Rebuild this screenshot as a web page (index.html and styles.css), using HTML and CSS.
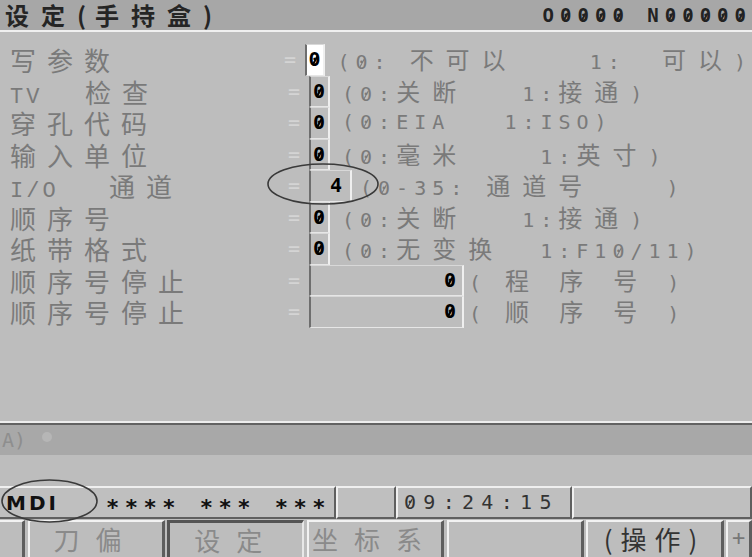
FILE: index.html
```html
<!DOCTYPE html>
<html lang="zh-CN">
<head>
  <meta charset="UTF-8" />
  <title>设定(手持盒)</title>
  <link rel="stylesheet" href="styles.css">
</head>
<body>
<div class="screen">
  <header class="title">
    <span class="name">设定<span class="par">(</span>手持盒<span class="par">)</span></span>
    <span class="prog">O<span class="z">0</span><span class="z">0</span><span class="z">0</span><span class="z">0</span> N<span class="z">0</span><span class="z">0</span><span class="z">0</span><span class="z">0</span><span class="z">0</span></span>
  </header>

  <main class="params">
    <div class="row">
      <span class="label">写参数</span><span class="eq">=</span><span class="box cur"><span class="z">0</span></span>
      <span class="desc">(<span class="z">0</span>: <span class="c">不可以</span>    1:  <span class="c">可以</span>)</span>
    </div>
    <div class="row">
      <span class="label"><span class="lat tv">TV</span>  检查</span><span class="eq">=</span><span class="box"><span class="z">0</span></span>
      <span class="desc">(<span class="z">0</span>:<span class="c">关断</span>   1:<span class="c">接通</span>)</span>
    </div>
    <div class="row">
      <span class="label">穿孔代码</span><span class="eq">=</span><span class="box"><span class="z">0</span></span>
      <span class="desc">(<span class="z">0</span>:EIA   1:ISO)</span>
    </div>
    <div class="row">
      <span class="label">输入单位</span><span class="eq">=</span><span class="box"><span class="z">0</span></span>
      <span class="desc">(<span class="z">0</span>:<span class="c">毫米</span>    1:<span class="c">英寸</span>)</span>
    </div>
    <div class="row">
      <span class="label"><span class="lat">I/O</span>   通道</span><span class="eq">=</span><span class="box mid">4</span>
      <span class="desc near">(<span class="z">0</span>-35: <span class="c">通道号</span>    )</span>
    </div>
    <div class="row">
      <span class="label">顺序号</span><span class="eq">=</span><span class="box"><span class="z">0</span></span>
      <span class="desc">(<span class="z">0</span>:<span class="c">关断</span>   1:<span class="c">接通</span>)</span>
    </div>
    <div class="row">
      <span class="label">纸带格式</span><span class="eq">=</span><span class="box"><span class="z">0</span></span>
      <span class="desc">(<span class="z">0</span>:<span class="c">无变换</span>  1:F1<span class="z">0</span>/11)</span>
    </div>
    <div class="row">
      <span class="label">顺序号停止</span><span class="eq">=</span><span class="box long"><span class="z">0</span></span>
      <span class="desc tight">( <span class="c">程</span> <span class="c">序</span> <span class="c">号</span> )</span>
    </div>
    <div class="row">
      <span class="label">顺序号停止</span><span class="eq">=</span><span class="box long"><span class="z">0</span></span>
      <span class="desc tight">( <span class="c">顺</span> <span class="c">序</span> <span class="c">号</span> )</span>
    </div>
  </main>

  <div class="input">A)<span class="blob"></span></div>
  <div class="spacer"></div>

  <div class="status">
    <div class="cell mode"><span class="mdi">MDI</span><span class="stars">**** *** ***</span></div>
    <div class="cell blank"></div>
    <div class="cell clock"><span class="z">0</span>9:24:15</div>
    <div class="cell rest"></div>
  </div>

  <nav class="keys">
    <span class="key edge"></span>
    <span class="key">刀偏</span>
    <span class="key on">设定</span>
    <span class="key">坐标系</span>
    <span class="key"></span>
    <span class="key op">(操作)</span>
    <span class="key edge plus">+</span>
  </nav>

  <!-- hand-drawn marks over the screen -->
  <svg class="mark mark-io" width="114" height="44" viewBox="0 0 114 44">
    <ellipse cx="57" cy="22" rx="55" ry="20" />
  </svg>
  <svg class="mark mark-mdi" width="99" height="46" viewBox="0 0 99 46">
    <ellipse cx="49.5" cy="23" rx="47.5" ry="21" />
  </svg>
</div>
</body>
</html>
```

FILE: styles.css
```css
body { margin: 0; width: 752px; height: 557px; overflow: hidden; background: #bdbdbd; font-family: "Noto Sans CJK SC", sans-serif; }
.screen { position: relative; width: 752px; height: 557px; overflow: hidden; }

/* slashed zero, as on the controller's font */
.z { position: relative; display: inline-block; letter-spacing: 0; }
.z::after { content: ""; position: absolute; left: 10%; right: 10%; top: 52%; border-top: 1.5px solid currentColor; transform: rotate(-62deg); }

.title { display: flex; justify-content: space-between; align-items: center; height: 30px; background: #a7a7a7; border-bottom: 2px solid #f0f0f0; }
.title .name { padding-left: 5px; font-size: 24px; font-weight: 700; letter-spacing: 12px; color: #252525; line-height: 30px; white-space: nowrap; }
.title .par { letter-spacing: 9px; }
.prog { font: 700 19px "DejaVu Sans Mono", monospace; letter-spacing: 6px; color: #222; line-height: 30px; white-space: pre; }
.prog .z { margin-right: 6px; }
.prog .z::after { border-top-width: 2px; }

.params { height: 391px; padding-top: 12px; box-sizing: border-box; border-bottom: 2px solid #ededed; }
.row { display: flex; align-items: center; height: 31.5px; }
.label { width: 288px; height: 31.5px; box-sizing: border-box; padding-left: 10px; font-size: 26px; letter-spacing: 11px; color: #7a7a7a; white-space: pre; line-height: 31px; overflow: hidden; }
.label .lat { font: 22px "Liberation Mono", monospace; letter-spacing: 3px; }
.label .lat.tv { padding-right: 9px; }
.eq { width: 21px; color: #d4d4d4; font: 20px "DejaVu Sans Mono", monospace; line-height: 31px; }
.box { width: 21px; height: 31.5px; box-sizing: border-box; border-left: 2px solid #6e6e6e; border-top: 1px solid #d8d8d8; border-right: 2px solid #efefef; border-bottom: 1px solid #e6e6e6; padding-right: 3px; text-align: right; font: 700 20px "DejaVu Sans Mono", monospace; line-height: 29px; color: #000; }
.box .z::after { border-top-width: 2px; }
.box.cur { background: #fff; }
.box.mid { width: 43px; padding-right: 8px; }
.box.long { width: 155px; padding-right: 6px; }
.desc { margin-left: 12px; white-space: pre; font: 20px "DejaVu Sans Mono", monospace; letter-spacing: 6px; line-height: 31px; color: #7a7a7a; }
.desc .z { margin-right: 6px; }
.desc.near { margin-left: 8px; }
.desc.tight { margin-left: 5px; }
.desc .c { font: 24px "Noto Sans CJK SC", sans-serif; letter-spacing: 12px; }

.input { height: 30px; background: #a8a8a8; border-top: 2px solid #626262; padding-left: 2px; font: 20px "DejaVu Sans Mono", monospace; line-height: 30px; color: #8e8e8e; display: flex; align-items: center; }
.blob { width: 10px; height: 10px; border-radius: 50%; background: #b6b6b6; margin-left: 16px; margin-top: -6px; }
.spacer { height: 31px; }

.status { display: flex; height: 33px; }
.cell { box-sizing: border-box; height: 33px; border-top: 2px solid #efefef; border-left: 2px solid #efefef; border-right: 2px solid #5f5f5f; border-bottom: 2px solid #5f5f5f; background: #bfbfbf; }
.mode { width: 336px; display: flex; align-items: center; border-left: none; }
.mdi { padding-left: 6px; font: 700 20px "DejaVu Sans", sans-serif; letter-spacing: 3px; color: #111; }
.stars { margin-left: 47px; font: 700 22px "DejaVu Sans Mono", monospace; letter-spacing: 5.5px; color: #111; white-space: pre; line-height: 1; padding-top: 10px; }
.blank { width: 60px; }
.clock { width: 176px; padding-left: 6px; font: 20px "DejaVu Sans Mono", monospace; letter-spacing: 7.3px; line-height: 29px; color: #333; }
.clock .z { margin-right: 7.3px; }
.rest { flex: 1; }

.keys { display: flex; gap: 2.5px; margin-top: 1px; height: 40px; }
.key { flex: 1; box-sizing: border-box; height: 40px; border-top: 2px solid #f2f2f2; border-left: 2px solid #f2f2f2; border-right: 3px solid #5e5e5e; text-align: center; font-size: 26px; letter-spacing: 16px; line-height: 34px; color: #8a8a8a; white-space: nowrap; overflow: hidden; }
.key.edge { flex: 0 0 25px; border-left: none; letter-spacing: 0; }
.key.plus { flex: 0 0 26px; border-left: 2px solid #f2f2f2; font: 22px "DejaVu Sans Mono", monospace; line-height: 32px; color: #777; }
.key.on { border-top: 3px solid #555; border-left: 3px solid #555; border-right: 2px solid #e8e8e8; }
.key.op { color: #333; letter-spacing: 8px; }

.mark { position: absolute; fill: none; stroke: #3a3a3a; stroke-width: 1.6; }
.mark-io { left: 266px; top: 162px; }
.mark-mdi { left: 0; top: 478px; }
```
